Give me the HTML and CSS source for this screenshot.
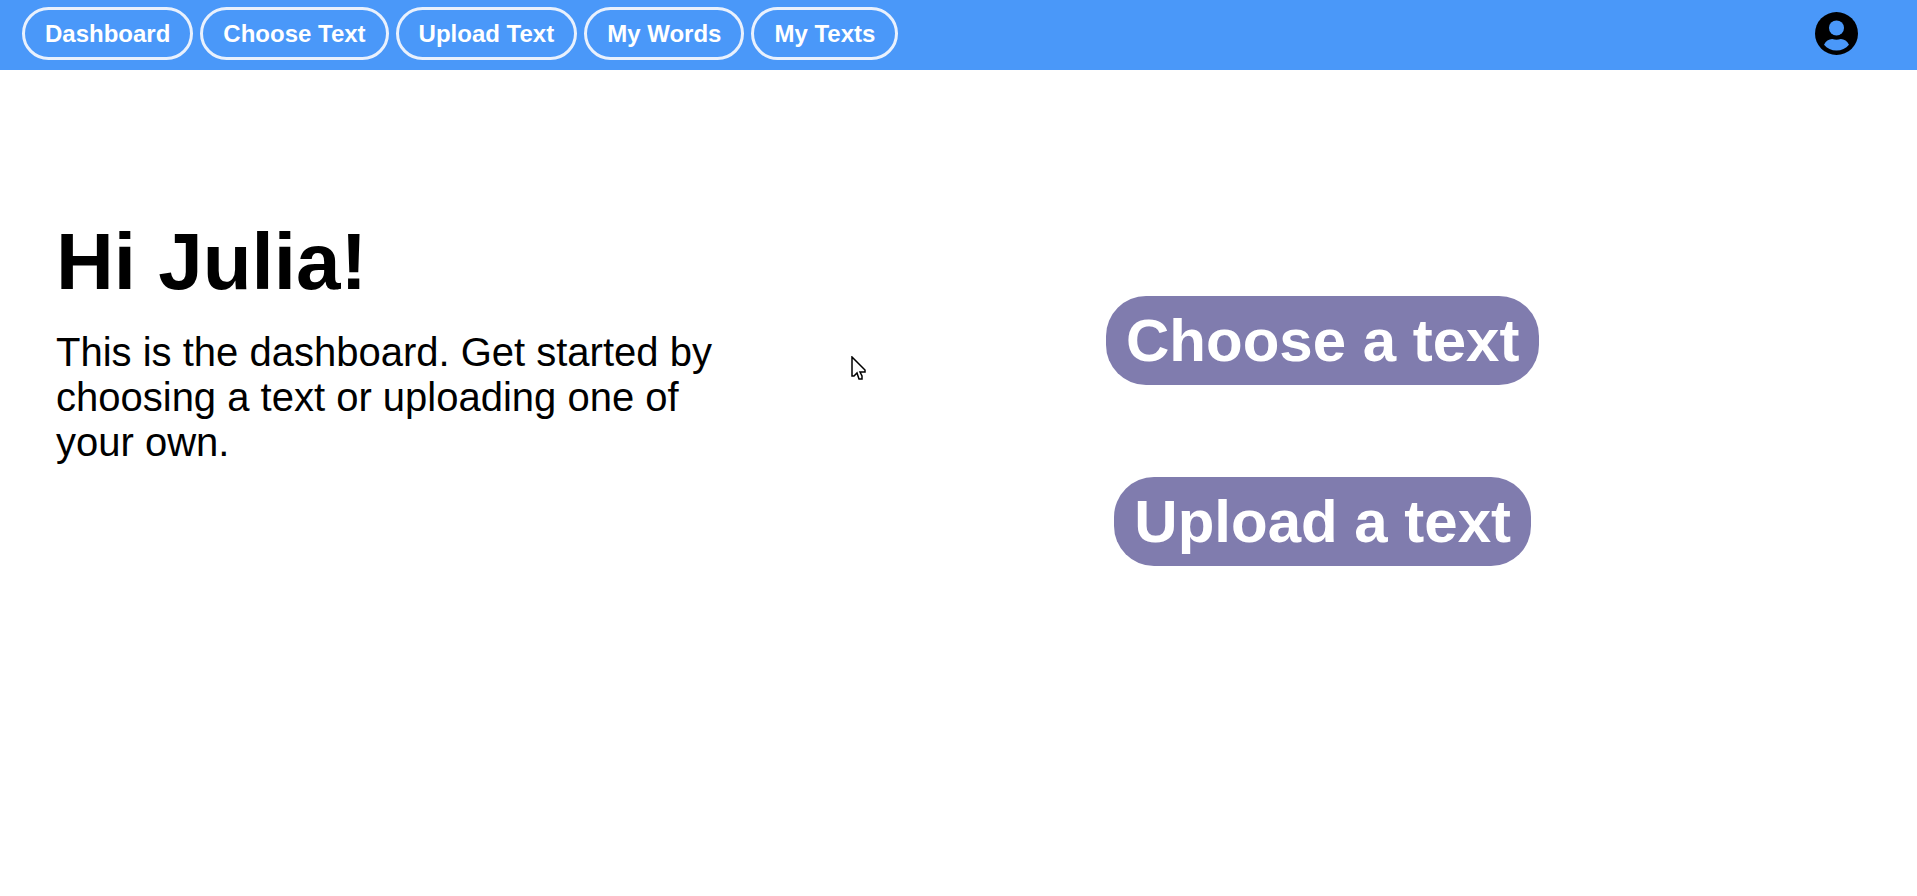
FILE: index.html
```html
<!DOCTYPE html>
<html lang="en">
<head>
  <meta charset="utf-8">
  <meta name="viewport" content="width=device-width, initial-scale=1">
  <title>Dashboard</title>
  <link rel="stylesheet" href="styles.css">
</head>
<body>
  <header class="navbar">
    <nav class="nav-links" aria-label="Main">
      <a class="nav-link" href="#dashboard">Dashboard</a>
      <a class="nav-link" href="#choose">Choose Text</a>
      <a class="nav-link" href="#upload">Upload Text</a>
      <a class="nav-link" href="#words">My Words</a>
      <a class="nav-link" href="#texts">My Texts</a>
    </nav>
    <button class="account" type="button" aria-label="Account">
      <svg class="account-icon" viewBox="2 2 20 20" aria-hidden="true">
        <circle cx="12" cy="12" r="10"/>
        <circle class="account-cutout" cx="12" cy="9.4" r="3.5"/>
        <path class="account-cutout" d="M6.2 17.200C7 15.600 8.400 14.600 10 14.600C11.300 15 12.700 15 14 14.600C15.600 14.600 17 15.600 17.800 17.200C16.400 18.900 14.300 19.900 12 19.900S7.600 18.900 6.200 17.200z"/>
      </svg>
    </button>
  </header>

  <main class="dashboard">
    <section class="intro">
      <h1 class="greeting">Hi Julia!</h1>
      <p class="message">This is the dashboard. Get started by choosing a text or uploading one of your own.</p>
    </section>
    <section class="actions" aria-label="Actions">
      <button class="action" type="button">Choose a text</button>
      <button class="action" type="button">Upload a text</button>
    </section>
  </main>

  <svg class="pointer" viewBox="0 0 15 25" aria-hidden="true">
    <path d="M1 1V20H3L6 17L8 23H11V20L9 16H14V14Z"/>
  </svg>
</body>
</html>
```
FILE: styles.css
```css
* {
  box-sizing: border-box;
}

body {
  margin: 0;
  background: #fff;
  color: #000;
  font-family: "Liberation Sans", Arial, sans-serif;
}

.navbar {
  display: flex;
  align-items: flex-start;
  justify-content: space-between;
  padding: 7px 59px 10px 22px;
  background: #4a98f9;
}

.nav-links {
  display: flex;
  flex-wrap: wrap;
  gap: 7px;
}

.nav-link {
  padding: 10px 20px;
  border: 3px solid #e9f1fd;
  border-radius: 28px;
  color: #fff;
  font-size: 24px;
  font-weight: bold;
  line-height: 27px;
  text-decoration: none;
}

.account {
  display: flex;
  padding: 5px 0 0;
  border: 0;
  background: none;
  cursor: pointer;
}

.account-icon {
  width: 43px;
  height: 43px;
}

.account-cutout {
  fill: #4a98f9;
}

.dashboard {
  display: grid;
  grid-template-columns: 38% 62%;
  align-items: start;
}

.intro {
  padding: 146px 0 0 56px;
}

.greeting {
  margin: 0;
  font-size: 80px;
  line-height: 92px;
}

.message {
  margin: 22px 0 0;
  font-size: 40px;
  line-height: 45px;
}

.actions {
  display: flex;
  flex-direction: column;
  align-items: center;
  gap: 92px;
  padding-top: 226px;
}

.action {
  padding: 10px 20px;
  border: 0;
  border-radius: 40px;
  background: #807cae;
  color: #fff;
  font-family: inherit;
  font-size: 60px;
  font-weight: bold;
  line-height: 69px;
  cursor: pointer;
}

.pointer {
  position: absolute;
  top: 356px;
  left: 851px;
  width: 15px;
  height: 25px;
  fill: #fff;
  stroke: #000;
  stroke-width: 1.5;
}
```
